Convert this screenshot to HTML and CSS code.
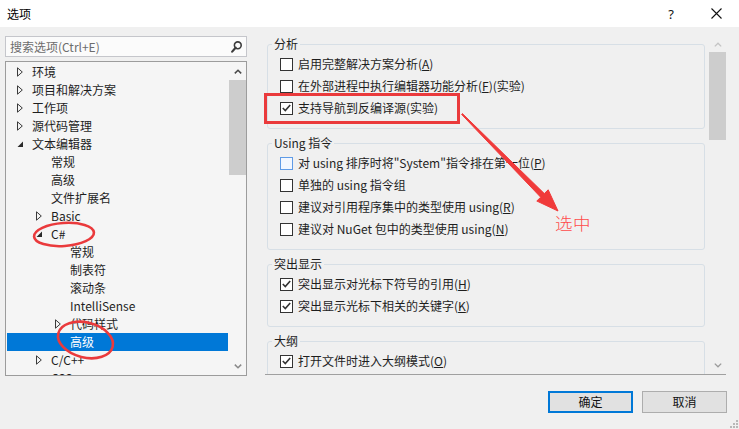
FILE: index.html
```html
<!DOCTYPE html>
<html lang="zh-CN">
<head>
<meta charset="utf-8">
<title>选项</title>
<link rel="stylesheet" href="styles.css">
</head>
<body>
<header class="titlebar">
  <span class="title">选项</span>
  <div class="title-btns">
    <span class="help">?</span>
    <svg class="close" width="11" height="11" viewBox="0 0 11 11"><path d="M0.5 0.5L10.5 10.5M10.5 0.5L0.5 10.5" stroke="#111" stroke-width="1.1" fill="none"/></svg>
  </div>
</header>

<main class="content">
  <section class="left">
    <div class="search">
      <span class="placeholder">搜索选项(Ctrl+E)</span>
      <svg width="11" height="12" viewBox="0 0 11 12"><circle cx="6.8" cy="4.3" r="3.4" stroke="#3c3c3c" stroke-width="1.6" fill="none"/><path d="M4.6 6.7L1.2 10.6" stroke="#3c3c3c" stroke-width="2.2" stroke-linecap="round"/></svg>
    </div>
    <div class="tree">
      <ul class="tree-list">
        <li class="row l0"><span class="tw"><svg width="7" height="10" viewBox="0 0 7 10"><path d="M0.5 0.8L5.3 5L0.5 9.2Z" fill="none" stroke="#3a3a3a"/></svg></span>环境</li>
        <li class="row l0"><span class="tw"><svg width="7" height="10" viewBox="0 0 7 10"><path d="M0.5 0.8L5.3 5L0.5 9.2Z" fill="none" stroke="#3a3a3a"/></svg></span>项目和解决方案</li>
        <li class="row l0"><span class="tw"><svg width="7" height="10" viewBox="0 0 7 10"><path d="M0.5 0.8L5.3 5L0.5 9.2Z" fill="none" stroke="#3a3a3a"/></svg></span>工作项</li>
        <li class="row l0"><span class="tw"><svg width="7" height="10" viewBox="0 0 7 10"><path d="M0.5 0.8L5.3 5L0.5 9.2Z" fill="none" stroke="#3a3a3a"/></svg></span>源代码管理</li>
        <li class="row l0"><span class="tw"><svg width="7" height="10" viewBox="0 0 7 10"><path d="M6 2.5L6 8L0.5 8Z" fill="#2a2a2a"/></svg></span>文本编辑器</li>
        <li class="row l1"><span class="tw"></span>常规</li>
        <li class="row l1"><span class="tw"></span>高级</li>
        <li class="row l1"><span class="tw"></span>文件扩展名</li>
        <li class="row l1"><span class="tw"><svg width="7" height="10" viewBox="0 0 7 10"><path d="M0.5 0.8L5.3 5L0.5 9.2Z" fill="none" stroke="#3a3a3a"/></svg></span>Basic</li>
        <li class="row l1"><span class="tw"><svg width="7" height="10" viewBox="0 0 7 10"><path d="M6 2.5L6 8L0.5 8Z" fill="#2a2a2a"/></svg></span>C#</li>
        <li class="row l2"><span class="tw"></span>常规</li>
        <li class="row l2"><span class="tw"></span>制表符</li>
        <li class="row l2"><span class="tw"></span>滚动条</li>
        <li class="row l2"><span class="tw"></span>IntelliSense</li>
        <li class="row l2"><span class="tw"><svg width="7" height="10" viewBox="0 0 7 10"><path d="M0.5 0.8L5.3 5L0.5 9.2Z" fill="none" stroke="#3a3a3a"/></svg></span>代码样式</li>
        <li class="row l2 sel"><span class="tw"></span>高级</li>
        <li class="row l1"><span class="tw"><svg width="7" height="10" viewBox="0 0 7 10"><path d="M0.5 0.8L5.3 5L0.5 9.2Z" fill="none" stroke="#3a3a3a"/></svg></span>C/C++</li>
        <li class="row l1"><span class="tw"></span>CSS</li>
      </ul>
      <div class="vscroll">
        <div class="sb-btn up"><svg width="8" height="5" viewBox="0 0 8 5"><path d="M0.8 4.4L4 1.2L7.2 4.4" stroke="#4a4a4a" stroke-width="1.5" fill="none"/></svg></div>
        <div class="sb-thumb tree-thumb"></div>
        <div class="sb-track"></div>
        <div class="sb-btn down"><svg width="8" height="5" viewBox="0 0 8 5"><path d="M0.8 0.6L4 3.8L7.2 0.6" stroke="#8a8a8a" stroke-width="1.5" fill="none"/></svg></div>
      </div>
    </div>
  </section>

  <section class="right">
    <div class="pages">
      <fieldset class="group">
        <legend>分析</legend>
        <div class="opt"><span class="cb"></span><span>启用完整解决方案分析(<u>A</u>)</span></div>
        <div class="opt"><span class="cb"></span><span>在外部进程中执行编辑器功能分析(<u>F</u>)(实验)</span></div>
        <div class="opt"><span class="cb"><svg width="9" height="8" viewBox="0 0 9 8"><path d="M0.8 4L3.3 6.6L8.2 1" stroke="#333" stroke-width="1.6" fill="none"/></svg></span><span>支持导航到反编译源(实验)</span></div>
      </fieldset>
      <fieldset class="group">
        <legend>Using 指令</legend>
        <div class="opt"><span class="cb hover"></span><span>对 using 排序时将"System"指令排在第一位(<u>P</u>)</span></div>
        <div class="opt"><span class="cb"></span><span>单独的 using 指令组</span></div>
        <div class="opt"><span class="cb"></span><span>建议对引用程序集中的类型使用 using(<u>R</u>)</span></div>
        <div class="opt"><span class="cb"></span><span>建议对 NuGet 包中的类型使用 using(<u>N</u>)</span></div>
      </fieldset>
      <fieldset class="group">
        <legend>突出显示</legend>
        <div class="opt"><span class="cb"><svg width="9" height="8" viewBox="0 0 9 8"><path d="M0.8 4L3.3 6.6L8.2 1" stroke="#333" stroke-width="1.6" fill="none"/></svg></span><span>突出显示对光标下符号的引用(<u>H</u>)</span></div>
        <div class="opt"><span class="cb"><svg width="9" height="8" viewBox="0 0 9 8"><path d="M0.8 4L3.3 6.6L8.2 1" stroke="#333" stroke-width="1.6" fill="none"/></svg></span><span>突出显示光标下相关的关键字(<u>K</u>)</span></div>
      </fieldset>
      <fieldset class="group">
        <legend>大纲</legend>
        <div class="opt"><span class="cb"><svg width="9" height="8" viewBox="0 0 9 8"><path d="M0.8 4L3.3 6.6L8.2 1" stroke="#333" stroke-width="1.6" fill="none"/></svg></span><span>打开文件时进入大纲模式(<u>O</u>)</span></div>
      </fieldset>
    </div>
    <div class="vscroll page-scroll">
      <div class="sb-btn up"><svg width="8" height="5" viewBox="0 0 8 5"><path d="M0.8 4.4L4 1.2L7.2 4.4" stroke="#c4c4c4" stroke-width="1.3" fill="none"/></svg></div>
      <div class="sb-thumb page-thumb"></div>
      <div class="sb-track"></div>
      <div class="sb-btn down"><svg width="8" height="5" viewBox="0 0 8 5"><path d="M0.8 0.6L4 3.8L7.2 0.6" stroke="#9a9a9a" stroke-width="1.3" fill="none"/></svg></div>
    </div>
  </section>
</main>

<footer class="buttons">
  <button class="btn default">确定</button>
  <button class="btn">取消</button>
</footer>

<svg class="grip" width="9" height="9" viewBox="0 0 9 9">
  <rect x="7" y="1" width="2" height="2" fill="#b8b8b8"/>
  <rect x="4" y="4" width="2" height="2" fill="#b8b8b8"/>
  <rect x="7" y="4" width="2" height="2" fill="#b8b8b8"/>
  <rect x="1" y="7" width="2" height="2" fill="#b8b8b8"/>
  <rect x="4" y="7" width="2" height="2" fill="#b8b8b8"/>
  <rect x="7" y="7" width="2" height="2" fill="#b8b8b8"/>
</svg>

<svg class="annot" width="739" height="429" viewBox="0 0 739 429">
  <rect x="265.5" y="94.5" width="193" height="28" fill="none" stroke="#ea3a3c" stroke-width="3"/>
  <ellipse cx="64" cy="234.5" rx="30" ry="11.5" transform="rotate(-4 64 234.5)" fill="none" stroke="#ea3a3c" stroke-width="2.6"/>
  <ellipse cx="85.5" cy="340" rx="28" ry="17.5" transform="rotate(14 85.5 340)" fill="none" stroke="#ea3a3c" stroke-width="2.6"/>
  <polygon points="462.4,113.6 544.3,193.6 548.2,189.8 558,211 536.8,201 540.7,197.2 461.6,114.4" fill="#f03a3a" stroke="#f03a3a" stroke-width="1" stroke-linejoin="round"/>
</svg>
<span class="annot-text">选中</span>
</body>
</html>
```

FILE: styles.css
```css
* { box-sizing: border-box; }

html, body { margin: 0; padding: 0; }

body {
  width: 739px;
  height: 429px;
  overflow: hidden;
  position: relative;
  background: #f0f0f0;
  color: #1e1e1e;
  font-family: "Noto Sans CJK SC", "Noto Sans", sans-serif;
  font-size: 12px;
}

/* title bar */
.titlebar {
  height: 27px;
  background: #ffffff;
  display: flex;
  align-items: center;
  justify-content: space-between;
  padding: 0 17px 0 7px;
}
.title { color: #000; line-height: 14px; }
.title-btns { display: flex; align-items: center; gap: 35px; }
.help { width: 10px; text-align: center; color: #111; font-size: 13px; line-height: 14px; font-family: "Noto Sans", sans-serif; }
.close { display: block; }

/* main */
.content {
  display: flex;
  padding: 9px 0 0 5px;
}

.left {
  width: 242px;
  display: flex;
  flex-direction: column;
  gap: 4px;
}

.search {
  height: 21px;
  background: #fbfbfb;
  border: 1px solid #c5c6cb;
  display: flex;
  align-items: center;
  justify-content: space-between;
  padding: 0 4px 0 4px;
}
.placeholder { color: #6d6d6d; line-height: 14px; }

.tree {
  height: 315px;
  border: 1px solid #9c9c9c;
  background: #f5f5f5;
  display: flex;
}
.tree-list {
  flex: 1;
  margin: 0;
  padding: 1px;
  list-style: none;
  overflow: hidden;
}
.row {
  height: 18px;
  display: flex;
  align-items: center;
  white-space: nowrap;
  line-height: 14px;
}
.row.l0 { padding-left: 9px; }
.row.l1 { padding-left: 28px; }
.row.l2 { padding-left: 47px; }
.tw {
  width: 16px;
  flex-shrink: 0;
  display: flex;
  align-items: center;
}
.tw svg { margin-left: 1px; }
.row.sel { background: #0078d7; color: #ffffff; }

/* scrollbars */
.vscroll {
  width: 17px;
  flex-shrink: 0;
  display: flex;
  flex-direction: column;
  align-items: center;
}
.sb-btn {
  width: 17px;
  height: 17px;
  display: flex;
  align-items: center;
  justify-content: center;
}
.sb-btn.up { height: 18px; }
.sb-thumb { width: 17px; background: #cdcdcd; }
.tree-thumb { height: 95px; }
.sb-track { flex: 1; }

/* right page */
.right {
  margin-left: 18px;
  width: 461px;
  height: 339px;
  border-bottom: 1px solid #a0a0a0;
  display: flex;
}
.pages {
  flex: 1;
  overflow: hidden;
  padding: 1px 4px 0 2px;
}
.group {
  margin: 0 0 7px 0;
  min-width: 0;
  border: 1px solid #d7dfe6;
  border-radius: 3px;
  padding: 2px 0 9px 12px;
}
.group legend {
  margin-left: -8px;
  padding: 0 2px;
  line-height: 14px;
}
.opt {
  height: 22px;
  display: flex;
  align-items: center;
  gap: 5px;
  white-space: nowrap;
  line-height: 14px;
}
.cb {
  width: 13px;
  height: 13px;
  flex-shrink: 0;
  border: 1px solid #333333;
  background: #ffffff;
  display: flex;
  align-items: center;
  justify-content: center;
}
.cb.hover { border-color: #5f9be6; background: #f2f7ff; }

.page-scroll .sb-btn.up { height: 16px; }
.page-thumb { height: 88px; }

/* buttons */
.buttons {
  display: flex;
  justify-content: flex-end;
  gap: 9px;
  padding-right: 12px;
  margin-top: 15px;
}
.btn {
  width: 85px;
  height: 22px;
  margin: 0;
  padding: 0;
  background: #e1e1e1;
  border: 1px solid #adadad;
  color: #111;
  font-family: "Noto Sans CJK SC", "Noto Sans", sans-serif;
  font-size: 12px;
  line-height: 14px;
}
.btn.default { border: 2px solid #0078d7; }

.grip { position: absolute; right: 1px; bottom: 1px; }

/* annotations drawn over the screenshot */
.annot { position: absolute; left: 0; top: 0; pointer-events: none; }
.annot-text {
  position: absolute;
  left: 555px;
  top: 213px;
  color: #ff4a4a;
  font-size: 17.5px;
  line-height: 20px;
  font-weight: 300;
  letter-spacing: 0.5px;
}
```
